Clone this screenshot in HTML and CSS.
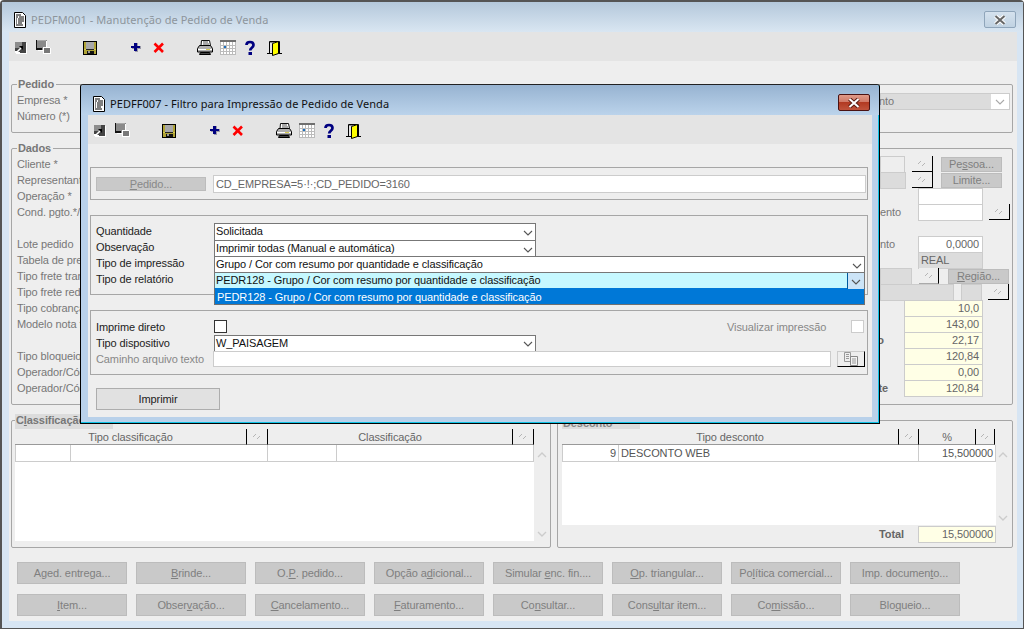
FILE: index.html
```html
<!DOCTYPE html>
<html lang="pt-BR">
<head>
<meta charset="utf-8">
<title>PEDFM001</title>
<link rel="stylesheet" href="styles.css">
</head>
<body>
<svg class="sprite" width="0" height="0" aria-hidden="true">
  <symbol id="i-doc" viewBox="0 0 14 16">
    <path d="M1.500 .5h8l3 3v12h-11z" fill="#fff" stroke="#000"/>
    <path d="M3 3h5M3 5h2M6 5h5M3 7h1M5 7h6M3 9h1M5 9h6M3 11h1M5 11h4M3 13h7" stroke="#000" fill="none"/>
  </symbol>
  <symbol id="i-arrow" viewBox="0 0 16 16">
    <rect x="2" y="2" width="11" height="11" fill="#444"/>
    <rect x="2" y="2" width="7" height="6" fill="#8c8c8c"/>
    <path d="M2 13h5v-1h-2v-1h-3z" fill="#fff"/>
    <path d="M4 12l5-5" stroke="#fff" stroke-width="1.600"/>
    <path d="M6 6h4v4z" fill="#000"/>
    <path d="M13 3h1v11h-11v-1h10z" fill="#fff"/>
  </symbol>
  <symbol id="i-copy" viewBox="0 0 16 16">
    <rect x="2" y="0" width="10" height="10" fill="#8a8a8a"/>
    <path d="M1 0h1v8h5v2h-6z" fill="#111"/>
    <path d="M2 0h9v1h-9z" fill="#a8a8a8"/>
    <rect x="8" y="7" width="7" height="7" fill="#fff"/>
    <rect x="9" y="8" width="6" height="5" fill="#777"/>
    <path d="M11 1h1v6h-1zM3 10h5v1h-5zM15 8h1v6h-1zM9 13h7v1h-7z" fill="#fff"/>
  </symbol>
  <symbol id="i-disk" viewBox="0 0 16 16">
    <rect x="1" y="1" width="14" height="14" fill="#000"/>
    <rect x="2" y="2" width="12" height="12" fill="#b0a436"/>
    <rect x="4" y="2" width="8" height="7" fill="#a8a8a8"/>
    <rect x="4" y="9" width="8" height="1" fill="#222"/>
    <rect x="5" y="11" width="7" height="3" fill="#111"/>
    <rect x="6" y="11" width="2" height="2" fill="#999"/>
    <path d="M2 9h2v1h-2zM12 9h2v1h-2z" fill="#d8cc50"/>
  </symbol>
  <symbol id="i-plus" viewBox="0 0 16 16">
    <path d="M7 3h3v3h3v3h-3v3h-3v-3h-3v-3h3z" fill="#9a9aa8"/>
    <path d="M6 3h3v3h3v2h-3v3h-3v-3h-3v-2h3z" fill="#000080"/>
  </symbol>
  <symbol id="i-x" viewBox="0 0 16 16">
    <path d="M3.500 3.500l8.500 8.500M12 3.500l-8.500 8.500" stroke="#f00" stroke-width="2.600" fill="none"/>
  </symbol>
  <symbol id="i-print" viewBox="0 0 16 16">
    <path d="M4.500 .5h8l1 5h-9.500z" fill="#fff" stroke="#111"/>
    <path d="M6 2h5M6 4h6" stroke="#555"/>
    <path d="M2.500 5.500h11l2 3v3.500h-15v-3.500z" fill="#b0b0b0" stroke="#000"/>
    <path d="M1 9.500h14" stroke="#fff"/>
    <path d="M9 9.500h4" stroke="#d8cc50"/>
    <path d="M3.500 12.500h9l1 2h-11z" fill="#444" stroke="#000"/>
  </symbol>
  <symbol id="i-cal" viewBox="0 0 16 16">
    <rect y="0" width="16" height="15" fill="#fff"/>
    <rect y="0" width="16" height="2" fill="#6f6f6f"/>
    <path d="M.5 2v13M3.500 2v13M6.500 2v13M9.500 2v13M12.500 2v13M15.500 2v13M0 5.500h16M0 8.500h16M0 11.500h16M0 14.500h16" stroke="#bbb" fill="none"/>
    <rect x="4" y="6" width="2" height="2" fill="#1a6fc0"/>
  </symbol>
  <symbol id="i-help" viewBox="0 0 16 16">
    <path d="M4.500 5c0-4 7-4 7 0c0 2.800-3.300 2.600-3.300 5.500" stroke="#000080" stroke-width="2.700" fill="none"/>
    <rect x="6.500" y="12" width="3.500" height="3" fill="#000080"/>
  </symbol>
  <symbol id="i-door" viewBox="0 0 16 16">
    <path d="M2.500 13.500v-12h10v12" stroke="#000" fill="none"/>
    <path d="M3 2h4v1h-4z" fill="#888"/>
    <path d="M0 13.500h15" stroke="#000" fill="none"/>
    <path d="M5.500 3.500l6-2v12l-6 2z" fill="#ff0" stroke="#000"/>
  </symbol>
  <symbol id="i-sort" viewBox="0 0 12 10">
    <path d="M4 2h1v1h-1zM3 3h1v1h-1zM2 4h1v1h-1zM8 4h1v1h-1zM7 5h1v1h-1zM6 6h1v1h-1z" fill="#b5b5b5"/>
  </symbol>
  <symbol id="i-chev" viewBox="0 0 10 6">
    <path d="M1 1l4 4 4-4" fill="none" stroke="#555" stroke-width="1.100"/>
  </symbol>
  <symbol id="i-up" viewBox="0 0 10 6">
    <path d="M1 5l4-4 4 4" fill="none" stroke="#ccc" stroke-width="1.400"/>
  </symbol>
  <symbol id="i-down" viewBox="0 0 10 6">
    <path d="M1 1l4 4 4-4" fill="none" stroke="#ccc" stroke-width="1.400"/>
  </symbol>
  <symbol id="i-files" viewBox="0 0 16 14">
    <path d="M1.500 .5h6v9h-6z" fill="#eee" stroke="#999"/>
    <path d="M3 2.500h3M3 4.500h3M3 6.500h3" stroke="#999"/>
    <path d="M7.500 4.500h7v9h-7z" fill="#f4f4f4" stroke="#888"/>
    <path d="M9 7h4M9 9h4M9 11h4" stroke="#999"/>
  </symbol>
</svg>

<div class="main-window">
  <header class="titlebar">
    <svg class="doc-icon"><use href="#i-doc"/></svg>
    <span class="main-title">PEDFM001 - Manutenção de Pedido de Venda</span>
    <span class="close-btn close-idle">
      <svg viewBox="0 0 12 10" class="close-x"><path d="M1.500 1l9 8M10.500 1l-9 8" stroke="#fff" stroke-width="4"/><path d="M1.500 1l9 8M10.500 1l-9 8" stroke="#666" stroke-width="2"/></svg>
    </span>
  </header>
  <div class="client">
    <div class="toolbar">
      <svg class="ti"><use href="#i-arrow"/></svg>
      <svg class="ti"><use href="#i-copy"/></svg>
      <svg class="ti"><use href="#i-disk"/></svg>
      <svg class="ti"><use href="#i-plus"/></svg>
      <svg class="ti"><use href="#i-x"/></svg>
      <svg class="ti"><use href="#i-print"/></svg>
      <svg class="ti"><use href="#i-cal"/></svg>
      <svg class="ti"><use href="#i-help"/></svg>
      <svg class="ti"><use href="#i-door"/></svg>
    </div>

    <section class="group g-pedido">
      <span class="legend">Pedido</span>
      <div class="labels">
        <span>Empresa *</span>
        <span>Número (*)</span>
      </div>
      <div class="combo-off">
        <span class="combo-off-text">nto</span>
        <svg class="chev"><use href="#i-chev"/></svg>
      </div>
    </section>

    <section class="group g-dados">
      <span class="legend">Dados</span>
      <div class="labels">
        <span>Cliente *</span>
        <span>Representante</span>
        <span>Operação *</span>
        <span>Cond. pgto.*/</span>
        <span></span>
        <span>Lote pedido</span>
        <span>Tabela de preço</span>
        <span>Tipo frete transp.</span>
        <span>Tipo frete redesp.</span>
        <span>Tipo cobrança</span>
        <span>Modelo nota fiscal</span>
        <span></span>
        <span>Tipo bloqueio</span>
        <span>Operador/Código</span>
        <span>Operador/Código</span>
      </div>
      <div class="rcol">
        <div class="rrow">
          <span class="f f-off w25"></span><span class="sort sort-a"><svg><use href="#i-sort"/></svg></span>
          <span class="btn btn-sm">Pe<u>s</u>soa...</span>
        </div>
        <div class="rrow">
          <span class="f f-gray w26"></span><span class="sort sort-b"><svg><use href="#i-sort"/></svg></span>
          <span class="btn btn-sm ml8">Limite...</span>
        </div>
        <div class="rrow ind"><span class="f w65"></span></div>
        <div class="rrow"><span class="frag">ento</span><span class="f w65"></span><span class="sort sort-c"><svg><use href="#i-sort"/></svg></span></div>
        <div class="rrow"></div>
        <div class="rrow"><span class="frag">nto</span><span class="f w65 num">0,0000</span></div>
        <div class="rrow ind"><span class="f f-gray w65 left">REAL</span></div>
        <div class="rrow">
          <span class="f f-gray w32"></span><span class="sort sort-d"><svg><use href="#i-sort"/></svg></span>
          <span class="btn btn-sm ml9"><u>R</u>egião...</span>
        </div>
        <div class="rrow">
          <span class="f f-gray w74"></span><span class="f f-gray w21 ml7"></span><span class="sort sort-c"><svg><use href="#i-sort"/></svg></span>
        </div>
        <div class="rrow ind2"><span class="f f-y">10,0</span></div>
        <div class="rrow ind2"><span class="f f-y">143,00</span></div>
        <div class="rrow"><span class="bfrag bfrag-a">Líquido</span><span class="f f-y">22,17</span></div>
        <div class="rrow ind2"><span class="f f-y">120,84</span></div>
        <div class="rrow ind2"><span class="f f-y">0,00</span></div>
        <div class="rrow"><span class="bfrag bfrag-b">Restante</span><span class="f f-y">120,84</span></div>
      </div>
    </section>

    <div class="bottom-groups">
      <section class="group g-class">
        <span class="legend legend-mask">C<u>l</u>assificação</span>
        <div class="thead">
          <span class="th w231">Tipo classificação</span><span class="sort th-sort w22"><svg><use href="#i-sort"/></svg></span>
          <span class="th w244">Classificação</span><span class="sort th-sort w22"><svg><use href="#i-sort"/></svg></span>
        </div>
        <div class="tbody">
          <div class="tr"><span class="td w56c"></span><span class="td w196"></span><span class="td w69"></span><span class="td w191"></span></div>
        </div>
        <svg class="sb sb-up"><use href="#i-up"/></svg>
        <svg class="sb sb-down"><use href="#i-down"/></svg>
      </section>
      <section class="group g-desc">
        <span class="legend legend-mask legend-desc">Desconto</span>
        <div class="thead">
          <span class="th w336">Tipo desconto</span><span class="sort th-sort w21"><svg><use href="#i-sort"/></svg></span>
          <span class="th w56">%</span><span class="sort th-sort w20"><svg><use href="#i-sort"/></svg></span>
        </div>
        <div class="tbody tbody-short">
          <div class="tr">
            <span class="td w56 tnum">9</span>
            <span class="td w300">DESCONTO WEB</span>
            <span class="td w78 tnum">15,500000</span>
          </div>
        </div>
        <div class="total"><b>Total</b><span class="f f-y w78t">15,500000</span></div>
        <svg class="sb sb-up2"><use href="#i-up"/></svg>
        <svg class="sb sb-down2"><use href="#i-down"/></svg>
      </section>
    </div>

    <div class="actions">
      <span class="btn">A<u>g</u>ed. entrega...</span>
      <span class="btn"><u>B</u>rinde...</span>
      <span class="btn">O.<u>P</u>. pedido...</span>
      <span class="btn">Opção a<u>d</u>icional...</span>
      <span class="btn">Simular <u>e</u>nc. fin....</span>
      <span class="btn"><u>O</u>p. triangular...</span>
      <span class="btn">Po<u>l</u>ítica comercial...</span>
      <span class="btn">Imp. documen<u>t</u>o...</span>
    </div>
    <div class="actions actions-2">
      <span class="btn"><u>I</u>tem...</span>
      <span class="btn">Obser<u>v</u>ação...</span>
      <span class="btn"><u>C</u>ancelamento...</span>
      <span class="btn"><u>F</u>aturamento...</span>
      <span class="btn">Co<u>n</u>sultar...</span>
      <span class="btn">Cons<u>u</u>ltar item...</span>
      <span class="btn">Co<u>m</u>issão...</span>
      <span class="btn">Blo<u>q</u>ueio...</span>
    </div>
  </div>
</div>

<div class="dialog">
  <header class="dlg-title">
    <svg class="doc-icon dlg-doc"><use href="#i-doc"/></svg>
    <span class="dlg-caption">PEDFF007 - Filtro para Impressão de Pedido de Venda</span>
    <span class="close-btn close-red">
      <svg viewBox="0 0 12 10" class="close-x"><path d="M1.500 1l9 8M10.500 1l-9 8" stroke="#5a1a10" stroke-width="4"/><path d="M1.500 1l9 8M10.500 1l-9 8" stroke="#fff" stroke-width="2"/></svg>
    </span>
  </header>
  <div class="dlg-client">
    <div class="toolbar">
      <svg class="ti"><use href="#i-arrow"/></svg>
      <svg class="ti"><use href="#i-copy"/></svg>
      <svg class="ti"><use href="#i-disk"/></svg>
      <svg class="ti"><use href="#i-plus"/></svg>
      <svg class="ti"><use href="#i-x"/></svg>
      <svg class="ti"><use href="#i-print"/></svg>
      <svg class="ti"><use href="#i-cal"/></svg>
      <svg class="ti"><use href="#i-help"/></svg>
      <svg class="ti"><use href="#i-door"/></svg>
    </div>

    <section class="dgroup dg-1">
      <span class="btn btn-ped"><u>P</u>edido...</span>
      <span class="dinput">CD_EMPRESA=5·!·;CD_PEDIDO=3160</span>
    </section>

    <section class="dgroup dg-2">
      <div class="frow">
        <span class="flabel">Quantidade</span>
        <span class="dcombo short">Solicitada<svg class="chev"><use href="#i-chev"/></svg></span>
      </div>
      <div class="frow">
        <span class="flabel">Observação</span>
        <span class="dcombo short">Imprimir todas (Manual e automática)<svg class="chev"><use href="#i-chev"/></svg></span>
      </div>
      <div class="frow">
        <span class="flabel">Tipo de impressão</span>
        <span class="dcombo long">Grupo / Cor com resumo por quantidade e classificação<svg class="chev"><use href="#i-chev"/></svg></span>
      </div>
      <div class="frow">
        <span class="flabel">Tipo de relatório</span>
        <span class="dcombo long active">PEDR128 - Grupo / Cor com resumo por quantidade e classificação<span class="chev-btn"><svg class="chev"><use href="#i-chev"/></svg></span></span>
      </div>
      <div class="droplist">PEDR128 - Grupo / Cor com resumo por quantidade e classificação</div>
    </section>

    <section class="dgroup dg-3">
      <div class="frow frow-check">
        <span class="flabel">Imprime direto</span>
        <span class="check"></span>
        <span class="vis-label">Visualizar impressão</span>
        <span class="check check-off"></span>
      </div>
      <div class="frow">
        <span class="flabel">Tipo dispositivo</span>
        <span class="dcombo short open-bottom">W_PAISAGEM<svg class="chev"><use href="#i-chev"/></svg></span>
      </div>
      <div class="frow">
        <span class="flabel flabel-off">Caminho arquivo texto</span>
        <span class="path-input"></span>
        <span class="file-btn"><svg><use href="#i-files"/></svg></span>
      </div>
    </section>

    <div class="print-row"><span class="print-btn">Imprimir</span></div>
  </div>
</div>
</body>
</html>
```

FILE: styles.css
```css
* { box-sizing: border-box; }
html, body { margin: 0; padding: 0; }
body {
  width: 1025px;
  height: 630px;
  overflow: hidden;
  background: #fff;
  font: 11px/16px "Liberation Sans", Arial, sans-serif;
  letter-spacing: -.1px;
  color: #777;
  position: relative;
}
.sprite { position: absolute; }
u { text-decoration: underline; }

/* main window */
.main-window {
  width: 1024px;
  height: 629px;
  border: 1px solid #555;
  border-top-width: 2px;
  border-left-width: 2px;
  border-radius: 4px 4px 0 0;
  background: #d7e5f3;
  padding: 0 6px 7px 7px;
  display: flex;
  flex-direction: column;
}
.titlebar {
  margin: 0 -6px 0 -7px;
  height: 30px;
  padding: 5px 0 0 11px;
  flex: none;
  display: flex;
  align-items: center;
  background: linear-gradient(#b4c8db, #d9e6f2);
  position: relative;
}
.doc-icon { width: 14px; height: 16px; flex: none; }
.main-title { margin-left: 4px; font: 11px/16px "Noto Sans", sans-serif; color: #8d959c; letter-spacing: .06px; }
.close-btn {
  position: absolute;
  display: flex;
  align-items: center;
  justify-content: center;
  width: 32px;
  height: 17px;
}
.close-idle { right: 7px; top: 9px; border: 1px solid #8fa5ba; border-radius: 2px; background: linear-gradient(#d5e2ee, #c0d2e2); }
.close-red { right: 9px; top: 9px; border: 1px solid #4a1212; border-radius: 2px; background: linear-gradient(#e09a88 0, #d07a68 45%, #b23a22 50%, #c0533c 100%); }
.close-x { width: 12px; height: 10px; }

.client {
  flex: 1;
  background: #eee;
  display: flex;
  flex-direction: column;
  padding: 0 4px 0 2px;
}
.toolbar {
  flex: none;
  height: 29px;
  margin: 0 -4px 0 -2px;
  background: #e4e4e4;
  padding: 8px 0 0 4px;
  display: grid;
  grid-template-columns: 22px 47px 46px 23px 46px 23px 22px 25px 16px;
  align-items: start;
}
.ti { width: 16px; height: 16px; display: block; }

.group {
  border: 1px solid #a6a6a6;
  border-radius: 2px;
  position: relative;
}
.legend {
  position: absolute;
  left: 5px;
  top: -7px;
  padding: 0 2px 0 1px;
  background: #eee;
  font-weight: bold;
  line-height: 13px;
  color: #777;
}
.labels { display: flex; flex-direction: column; padding-left: 5px; }
.labels span { height: 16px; white-space: nowrap; }

.g-pedido {
  margin-top: 23px;
  height: 49px;
  flex: none;
  display: flex;
  justify-content: space-between;
  align-items: flex-start;
  padding-top: 7px;
}
.combo-off {
  width: 130px;
  height: 17px;
  margin: 1px 2px 0 0;
  background: #fff;
  border: 1px solid #ccc;
  display: flex;
  align-items: center;
  justify-content: flex-end;
  position: relative;
}
.combo-off::before {
  content: "";
  position: absolute;
  left: 0;
  top: 0;
  bottom: 0;
  right: 18px;
  background: #dcdcdc;
}
.combo-off-text { position: absolute; left: -2px; top: -1px; color: #777; }
.chev { width: 10px; height: 6px; flex: none; position: relative; }
.combo-off .chev { margin-right: 4px; opacity: .5; }

.g-dados {
  margin-top: 15px;
  height: 257px;
  flex: none;
  display: flex;
  justify-content: space-between;
  padding-top: 7px;
}
.rcol { width: 132px; display: flex; flex-direction: column; }
.rrow { height: 16px; display: flex; align-items: center; flex: none; }
.ind { padding-left: 38px; }
.ind2 { padding-left: 24px; }

.f {
  height: 17px;
  margin-bottom: -1px;
  background: #fff;
  border: 1px solid #ccc;
  padding: 0 2px;
  line-height: 15px;
  color: #666;
  display: block;
  flex: none;
  text-align: right;
}
.f-off { background: #eee; }
.f-gray { background: #dcdcdc; }
.left { text-align: left; }
.num { padding-right: 3px; }
.f-y { background: #ffffe6; width: 79px; padding-right: 3px; }
.w25 { width: 25px; } .w26 { width: 26px; } .w32 { width: 32px; } .w65 { width: 65px; }
.w74 { width: 74px; } .w21 { width: 21px; }
.ml7 { margin-left: 7px; } .ml8 { margin-left: 8px; } .ml9 { margin-left: 9px; }
.frag { width: 38px; flex: none; }
.bfrag { width: 24px; flex: none; display: flex; justify-content: flex-end; font-weight: bold; color: #666; white-space: nowrap; }
.bfrag-a { padding-right: 20px; }
.bfrag-b { padding-right: 16px; }

.sort {
  flex: none;
  width: 21px;
  height: 16px;
  background: #eee;
  border-right: 1px solid #000;
  border-bottom: 1px solid #000;
  display: flex;
  align-items: center;
  justify-content: center;
}
.sort svg { width: 12px; height: 10px; }
.sort-a { margin-left: 7px; margin-right: 8px; }
.sort-b { margin-left: 6px; }
.sort-c { margin-left: 6px; }
.sort-d { margin-left: 7px; width: 20px; border-bottom: 1px solid #aaa; }

.btn {
  flex: none;
  width: 110px;
  height: 22px;
  background: #c9c9c9;
  border: 1px solid #bcbcbc;
  display: flex;
  align-items: center;
  justify-content: center;
  color: #7f7f7f;
  white-space: pre;
}
.btn-sm { width: 61px; height: 15px; line-height: 13px; }

.bottom-groups {
  margin-top: 15px;
  height: 128px;
  flex: none;
  display: flex;
  gap: 6px;
}
.g-class { width: 540px; flex: none; padding: 8px 0 0 3px; }
.g-desc { flex: 1; padding: 8px 0 0 4px; }
.legend-mask { background: #dcdcdc; width: 98px; left: 3px; height: 15px; top: -7px; }
.legend-desc { width: 78px; left: 4px; top: -3px; height: 11px; line-height: 10px; color: #888; }
.thead { display: flex; height: 16px; }
.th {
  flex: none;
  text-align: center;
  background: #eee;
  border-bottom: 1px solid #999;
  color: #666;
}
.th-sort {
  border-left: 1px solid #000;
  border-right: 1px solid #000;
  border-bottom: 1px solid #999;
}
.w231 { width: 231px; } .w244 { width: 244px; } .w22 { width: 22px; } .w20 { width: 20px; }
.w336 { width: 336px; } .w56 { width: 56px; }
.tbody { width: 519px; height: 96px; background: #fff; }
.tbody-short { width: 434px; height: 80px; }
.tr { display: flex; height: 17px; border-bottom: 1px solid #ccc; border-left: 1px solid #ccc; border-right: 1px solid #ccc; }
.td { flex: none; border-right: 1px solid #ccc; padding: 0 2px; color: #555; white-space: nowrap; line-height: 16px; }
.td:last-child { border-right: 0; }
.w56c { width: 55px; } .w196 { width: 197px; } .w69 { width: 69px; } .w191 { flex: 1; }
.w300 { width: 300px; } .w78 { flex: 1; }
.tnum { text-align: right; padding-right: 2px; }
.total { width: 434px; height: 17px; display: flex; justify-content: flex-end; align-items: center; gap: 14px; }
.total b { color: #666; }
.w78t { width: 78px; padding-right: 2px; }
.sb { position: absolute; width: 10px; height: 6px; }
.sb-up { left: 525px; top: 31px; }
.sb-down { left: 525px; top: 110px; }
.sb-up2 { left: 440px; top: 31px; }
.sb-down2 { left: 440px; top: 94px; }

.actions { display: flex; gap: 9px; margin: 14px 0 0 6px; flex: none; }
.actions-2 { margin-top: 10px; }

/* dialog */
.dialog {
  position: absolute;
  left: 80px;
  top: 84px;
  width: 800px;
  height: 340px;
  border: 1px solid #000;
  border-top-color: #222;
  border-radius: 3px 3px 0 0;
  background: #b9d1ea;
  box-shadow: inset -1px -1px 0 #0fc3e6;
  padding: 0 7px 6px 7px;
  display: flex;
  flex-direction: column;
  color: #222;
}
.dlg-title {
  margin: 0 -7px;
  height: 30px;
  flex: none;
  padding: 7px 0 0 11px;
  display: flex;
  align-items: center;
  background: linear-gradient(#97b3d1, #bbd3eb);
  position: relative;
  border-radius: 3px 3px 0 0;
}
.dlg-caption { margin-left: 4px; font: 11px/16px "Noto Sans", sans-serif; color: #111; letter-spacing: .06px; }
.dlg-client {
  flex: 1;
  background: #eee;
  padding: 0 4px 0 2px;
  display: flex;
  flex-direction: column;
}
.dgroup { border: 1px solid #a6a6a6; flex: none; position: relative; }
.dg-1 {
  margin-top: 23px;
  height: 33px;
  display: flex;
  align-items: center;
  padding: 0 1px 0 5px;
  gap: 7px;
}
.btn-ped { height: 14px; line-height: 12px; color: #888; }
.dinput {
  flex: 1;
  height: 18px;
  background: #fff;
  border: 1px solid #ccc;
  padding-left: 2px;
  line-height: 16px;
  color: #666;
}
.dg-2 { margin-top: 15px; height: 80px; padding-top: 7px; }
.frow { display: flex; height: 16px; padding-left: 5px; align-items: flex-start; }
.dg-2 .frow:first-child { height: 17px; }
.dg-2 .frow + .frow .flabel { margin-top: -1px; }
.flabel { width: 118px; flex: none; color: #222; line-height: 16px; }
.flabel-off { color: #888; }
.dcombo {
  flex: none;
  display: flex;
  align-items: center;
  justify-content: space-between;
  height: 17px;
  background: #fff;
  border: 1px solid #777;
  border-bottom: 0;
  padding: 0 2px 1px 1px;
  line-height: 15px;
  color: #111;
  white-space: nowrap;
  position: relative;
}
.short { width: 322px; }
.long { width: 651px; margin-right: 1px; }
.dcombo .chev { top: 1px; }
.active { background: #c6f8ff; border-bottom: 1px solid #0078d7; padding: 0 0 1px 1px; height: 17px; }
.chev-btn {
  width: 17px;
  height: 16px;
  margin-bottom: -1px;
  background: #cce4f7;
  border-left: 1px solid #005a9e;
  display: flex;
  align-items: center;
  justify-content: center;
}
.droplist {
  position: absolute;
  left: 123px;
  top: 73px;
  width: 651px;
  height: 16px;
  background: #0078d7;
  border: 1px solid #707070;
  border-top: 0;
  color: #fff;
  padding: 1px 0 0 2px;
  line-height: 15px;
}
.dg-3 { margin-top: 15px; height: 65px; padding-top: 9px; }
.frow-check { height: 15px; position: relative; }
.frow-check .flabel, .vis-label { margin-top: -1px; }
.check { width: 13px; height: 13px; background: #fff; border: 1px solid #333; display: block; flex: none; }
.vis-label { margin-left: auto; width: 124px; color: #888; }
.check-off { border-color: #ccc; margin-right: 3px; }
.open-bottom { height: 16px; }
.path-input { width: 618px; height: 16px; margin-left: -1px; background: #fff; border: 1px solid #ccc; flex: none; }
.file-btn {
  width: 28px;
  height: 16px;
  margin-left: 6px;
  flex: none;
  background: #eee;
  border-top: 1px solid #ccc;
  border-left: 1px solid #ccc;
  border-right: 1px solid #000;
  border-bottom: 1px solid #000;
  display: flex;
  align-items: center;
  justify-content: center;
}
.file-btn svg { width: 16px; height: 14px; }
.print-row { margin: 13px 0 0 6px; }
.print-btn {
  width: 124px;
  height: 22px;
  display: flex;
  align-items: center;
  justify-content: center;
  background: #e1e1e1;
  border: 1px solid #adadad;
  color: #222;
}
```
